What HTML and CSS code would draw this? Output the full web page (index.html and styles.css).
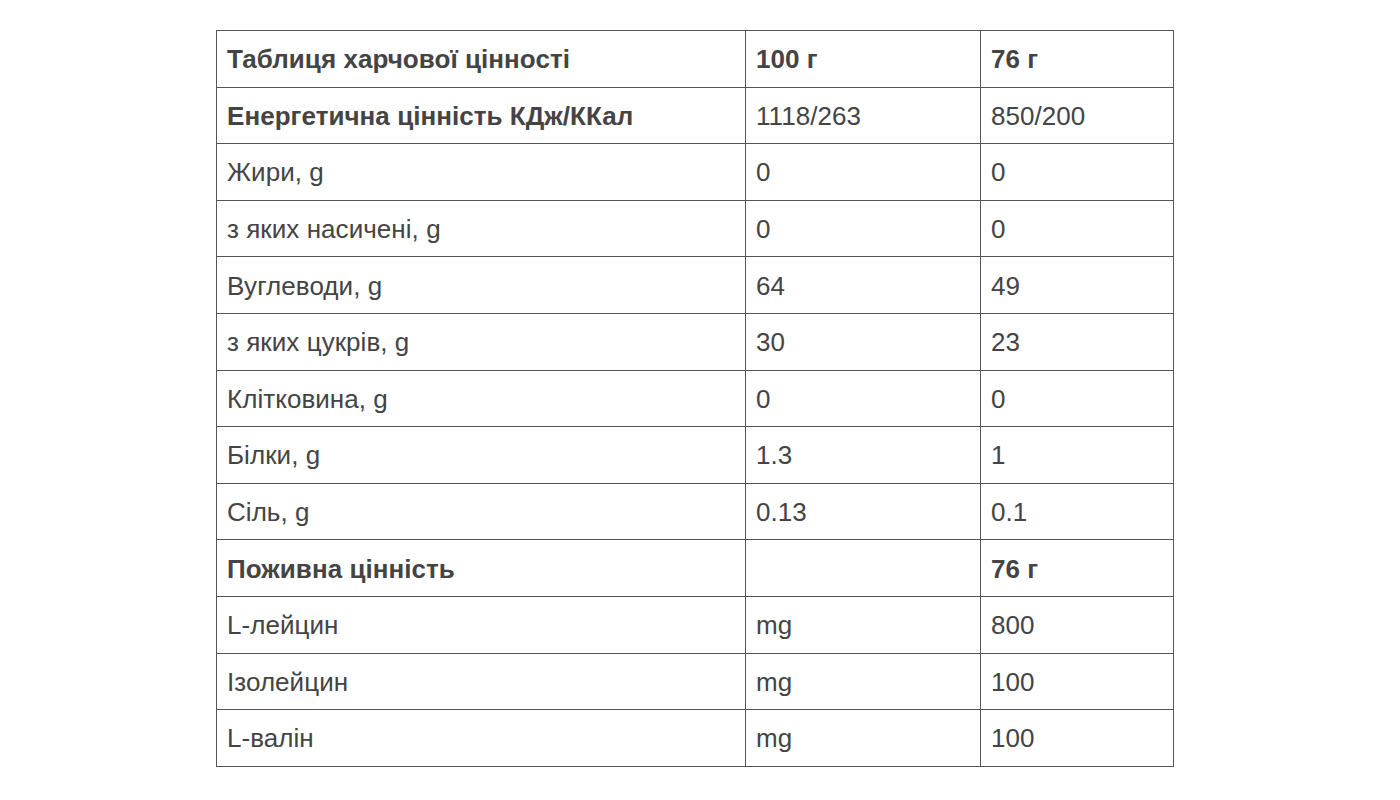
FILE: index.html
```html
<!DOCTYPE html>
<html lang="uk">
<head>
<meta charset="utf-8">
<title>Таблиця харчової цінності</title>
<link rel="stylesheet" href="styles.css">
</head>
<body>
<div class="page">
<table class="nutrition">
<colgroup>
<col class="c1"><col class="c2"><col class="c3">
</colgroup>
<tbody>
<tr class="bold"><td>Таблиця харчової цінності</td><td>100 г</td><td>76 г</td></tr>
<tr><td class="b">Енергетична цінність КДж/ККал</td><td>1118/263</td><td>850/200</td></tr>
<tr><td>Жири, g</td><td>0</td><td>0</td></tr>
<tr><td>з яких насичені, g</td><td>0</td><td>0</td></tr>
<tr><td>Вуглеводи, g</td><td>64</td><td>49</td></tr>
<tr><td>з яких цукрів, g</td><td>30</td><td>23</td></tr>
<tr><td>Клітковина, g</td><td>0</td><td>0</td></tr>
<tr><td>Білки, g</td><td>1.3</td><td>1</td></tr>
<tr><td>Сіль, g</td><td>0.13</td><td>0.1</td></tr>
<tr class="bold"><td>Поживна цінність</td><td></td><td>76 г</td></tr>
<tr><td>L-лейцин</td><td>mg</td><td>800</td></tr>
<tr><td>Ізолейцин</td><td>mg</td><td>100</td></tr>
<tr><td>L-валін</td><td>mg</td><td>100</td></tr>
</tbody>
</table>
</div>
</body>
</html>
```
FILE: styles.css
```css
html, body {
  margin: 0;
  padding: 0;
  background: #ffffff;
}
.page {
  padding: 30px 0 0 216px;
}
.nutrition {
  border-collapse: collapse;
  width: 957px;
  table-layout: fixed;
  font-family: "Liberation Sans", Arial, sans-serif;
  font-size: 26px;
  letter-spacing: 0.05px;
  color: #444444;
}
.c1 { width: 529px; }
.c2 { width: 235px; }
.c3 { width: 193px; }
.nutrition td {
  border: 1px solid #555555;
  padding: 2px 10px 0;
  height: 53.6px;
  vertical-align: middle;
  text-align: left;
  white-space: nowrap;
}
.nutrition tr.bold td,
.nutrition td.b {
  font-weight: bold;
}
```
